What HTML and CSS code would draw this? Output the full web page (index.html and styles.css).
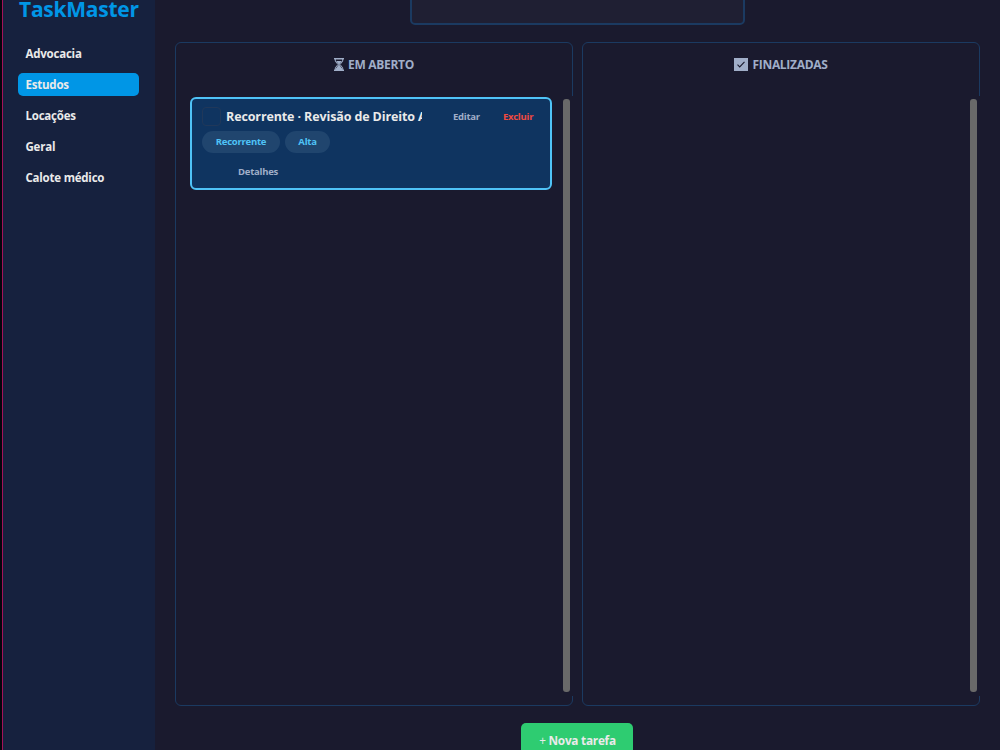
FILE: index.html
```
<!DOCTYPE html>
<html lang="pt-BR">
<head>
    <meta charset="UTF-8">
    <meta name="viewport" content="width=device-width, initial-scale=1.0">
    <title>TaskMaster</title>
    <link rel="stylesheet" href="styles.css">
</head>
<body>
    <aside class="sidebar">
        <h1>TaskMaster</h1>
        <nav class="menu">
            <a class="menu-item">Advocacia</a>
            <a class="menu-item active">Estudos</a>
            <a class="menu-item">Locações</a>
            <a class="menu-item">Geral</a>
            <a class="menu-item">Calote médico</a>
        </nav>
    </aside>
    <main class="content">
        <div class="summary"></div>
        <div class="board">
            <section class="column">
                <h2>
                    <svg class="icon-hourglass" width="10" height="13" viewBox="0 0 10 13">
                        <path d="M0 .7h10M0 12.3h10" stroke="#a0aec8" stroke-width="1.4"/>
                        <path d="M1.3 1v2.2L4 6.5 1.3 9.8V12M8.7 1v2.2L6 6.5l2.7 3.3V12" fill="none" stroke="#a0aec8"/>
                        <path d="M2 3h6L5.6 6v1.2L8 10.3V12H2v-1.7l2.4-3.1V6z" fill="#a0aec8"/>
                    </svg>
                    <span class="title-open">EM ABERTO</span>
                </h2>
                <div class="list">
                    <article class="card">
                        <div class="card-top">
                            <span class="checkbox"></span>
                            <div class="card-title"><span>Recorrente · Revisão de Direito A</span></div>
                            <a class="edit">Editar</a>
                            <a class="delete">Excluir</a>
                        </div>
                        <div class="tags">
                            <span class="tag tag-type">Recorrente</span>
                            <span class="tag tag-priority">Alta</span>
                        </div>
                        <a class="details">Detalhes</a>
                    </article>
                    <div class="scrollbar"></div>
                </div>
            </section>
            <section class="column">
                <h2>
                    <svg class="icon-check" width="14" height="13" viewBox="0 0 14 13">
                        <path d="M0 0h14v13H0z" fill="#a0aec8"/>
                        <path d="M3.5 6.7l2.2 2.2 4.8-5.1" fill="none" stroke="#1a1a2e" stroke-width="1.1"/>
                    </svg>
                    <span class="title-done">FINALIZADAS</span>
                </h2>
                <div class="list">
                    <div class="scrollbar"></div>
                </div>
            </section>
        </div>
        <button class="new-task"><span class="plus">+</span> Nova tarefa</button>
    </main>
</body>
</html>
```
FILE: styles.css
```
* { box-sizing: border-box; }
body { margin: 0; height: 750px; display: flex; overflow: hidden; background-color: #1a1a2e; border-left: 2px solid #05050c; font-family: "Open Sans", "Noto Sans", sans-serif; font-weight: 700; }

.sidebar { width: 153px; flex-shrink: 0; padding: 0 16px; background-color: #16213e; border-left: 1px solid #a3125a; }
h1 { margin: -6px 0 0; height: 30px; line-height: 30px; font-size: 21px; letter-spacing: -0.25px; color: #0096e6; white-space: nowrap; }
.menu { display: flex; flex-direction: column; gap: 8px; margin: 18px 0 0 -1px; }
.menu-item { width: 121px; height: 23px; padding-left: 7.5px; line-height: 24px; font-size: 11.5px; letter-spacing: -0.22px; color: #eaeaea; border-radius: 5px; white-space: nowrap; }
.menu-item.active { background-color: #0096e6; }

.content { flex: 1; display: flex; flex-direction: column; padding: 0 20px; }
.summary { width: 335px; height: 32px; flex-shrink: 0; margin: -7px 0 17px 235px; background-color: #1f1f33; border: 2px solid #1b3a61; border-radius: 5px; }
.board { display: grid; grid-template-columns: 398px 398px; gap: 9px; height: 664px; flex-shrink: 0; }
.column { display: flex; flex-direction: column; padding-bottom: 9px; border: 1px solid #1b3a61; border-radius: 6px; }
h2 { display: flex; justify-content: center; align-items: center; gap: 4px; height: 42px; margin: 0 0 11px; font-size: 12px; letter-spacing: -0.3px; color: #a0aec8; }
.list { flex: 1; display: flex; justify-content: space-between; margin-right: -1px; padding: 1px 3px 4px 14px; background-color: #1a1a2e; }
.scrollbar { width: 7px; margin: 2px 0 0 auto; background-color: #696969; border-radius: 3px; }

.card { width: 362px; height: 93px; padding: 7px 10px; background-color: #0f3460; border: 2px solid #4fc3f7; border-radius: 6px; }
.card-top { display: flex; align-items: center; height: 20px; }
.checkbox { width: 19px; height: 19px; flex-shrink: 0; margin-right: 5px; border: 1px solid #20385a; border-radius: 4px; }
.card-title { width: 196px; flex-shrink: 0; overflow: hidden; font-size: 12.5px; letter-spacing: -0.12px; color: #eaeaea; white-space: nowrap; }
.edit, .delete, .details { font-size: 9.5px; letter-spacing: -0.25px; color: #a0aec8; }
.edit { margin-left: 31px; }
.delete { margin-left: 23px; color: #f04a40; }
.tags { display: flex; gap: 5px; margin-top: 5px; }
.tag { height: 22px; line-height: 22px; border-radius: 11px; background-color: #20456e; font-size: 9.5px; letter-spacing: -0.25px; color: #4fc3f7; text-align: center; }
.tag-type { width: 78px; }
.tag-priority { width: 45px; }
.details { display: block; margin: 12px 0 0 36px; line-height: 14px; }

.new-task { width: 112px; height: 34px; flex-shrink: 0; margin: 17px 0 0 346px; padding: 0 0 0 1px; border: 0; border-radius: 5px; background-color: #2ecc71; font: inherit; font-size: 11.8px; letter-spacing: -0.25px; color: #eaeaea; white-space: nowrap; }
.plus { font-weight: 400; }
```
